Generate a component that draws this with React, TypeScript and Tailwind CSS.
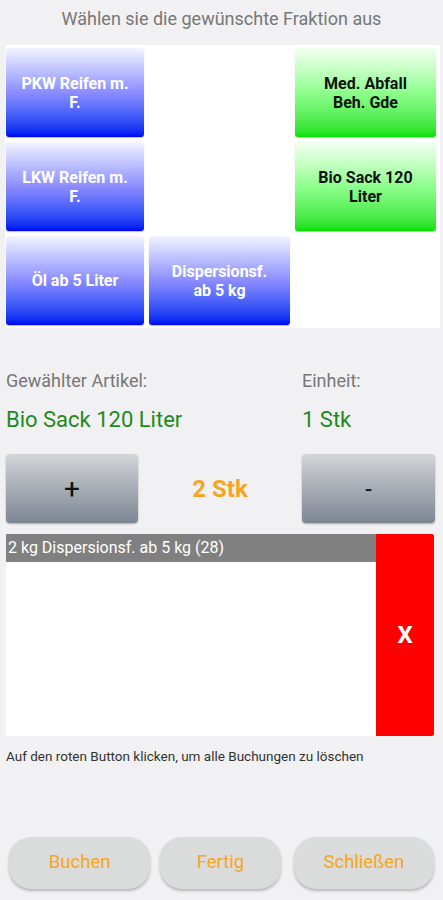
import React from 'react';

type Tile = { label: string[]; color: 'blue' | 'green' } | null;

const tiles: Tile[] = [
  { label: ['PKW Reifen m.', 'F.'], color: 'blue' },
  null,
  { label: ['Med. Abfall', 'Beh. Gde'], color: 'green' },
  { label: ['LKW Reifen m.', 'F.'], color: 'blue' },
  null,
  { label: ['Bio Sack 120', 'Liter'], color: 'green' },
  { label: ['Öl ab 5 Liter'], color: 'blue' },
  { label: ['Dispersionsf.', 'ab 5 kg'], color: 'blue' },
  null,
];

const App: React.FC = () => {
  return (
    <div className="w-[443px] h-[900px] bg-[#f1f1f3] flex flex-col font-['Roboto',sans-serif] overflow-hidden">
      {/* title */}
      <div className="h-[45px] pt-[7px] text-center text-[18px] leading-[24px] text-[#777]">
        Wählen sie die gewünschte Fraktion aus
      </div>

      {/* fraction grid */}
      <div className="mx-[5px] w-[435px] bg-white pt-[3px] pb-[3px] px-[1px] grid grid-cols-[138px_141px_141px] grid-rows-[89px_89px_89px] gap-x-[5px] gap-y-[5px]">
        {tiles.map((t, i) =>
          t ? (
            <div
              key={i}
              className={
                t.color === 'blue'
                  ? 'rounded-[3px] bg-gradient-to-b from-[#f4f4ff] via-[#8c8cff] to-[#0000f0] text-white font-bold text-[16px] leading-[19px] flex flex-col items-center justify-center text-center shadow-[0_1px_1px_rgba(0,0,0,0.25)]'
                  : 'rounded-[3px] bg-gradient-to-b from-[#f2fff2] via-[#8cff8c] to-[#00e000] text-[#111] font-bold text-[16px] leading-[19px] flex flex-col items-center justify-center text-center shadow-[0_1px_1px_rgba(0,0,0,0.25)]'
              }
            >
              {t.label.map((l) => (
                <span key={l}>{l}</span>
              ))}
            </div>
          ) : (
            <div key={i} />
          )
        )}
      </div>

      {/* selected article */}
      <div className="mt-[42px] flex px-[6px] text-[18px] leading-[22px] text-[#777]">
        <div className="w-[296px]">Gewählter Artikel:</div>
        <div>Einheit:</div>
      </div>
      <div className="mt-[14px] flex px-[6px] text-[22px] leading-[28px] text-[#1e8a1e]">
        <div className="w-[296px]">Bio Sack 120 Liter</div>
        <div>1 Stk</div>
      </div>

      {/* quantity */}
      <div className="mt-[20px] flex items-center px-[6px]">
        <div className="w-[132px] h-[69px] rounded-[4px] bg-gradient-to-b from-[#d3d5d8] to-[#7c8693] shadow-[0_1px_2px_rgba(0,0,0,0.3)] flex items-center justify-center text-[28px] text-[#111]">
          +
        </div>
        <div className="flex-1 text-center text-[24px] font-bold text-[#f5a524]">2 Stk</div>
        <div className="w-[133px] h-[69px] mr-[2px] rounded-[4px] bg-gradient-to-b from-[#d3d5d8] to-[#7c8693] shadow-[0_1px_2px_rgba(0,0,0,0.3)] flex items-center justify-center text-[24px] text-[#111]">
          -
        </div>
      </div>

      {/* bookings list */}
      <div className="mt-[11px] mx-[6px] w-[428px] h-[202px] flex">
        <div className="flex-1 bg-white">
          <div className="h-[28px] bg-[#808080] text-white text-[16px] leading-[28px] px-[2px]">
            2 kg Dispersionsf. ab 5 kg (28)
          </div>
        </div>
        <div className="w-[58px] bg-[#ff0000] rounded-r-[2px] flex items-center justify-center text-white font-bold text-[24px]">
          X
        </div>
      </div>
      <div className="mt-[11px] px-[6px] text-[13.5px] leading-[18px] text-[#333]">
        Auf den roten Button klicken, um alle Buchungen zu löschen
      </div>

      {/* actions */}
      <div className="mt-[72px] flex px-[9px] gap-[10px]">
        <div className="w-[142px] h-[52px] rounded-[22px] bg-[#dadbdb] shadow-[0_2px_3px_rgba(0,0,0,0.25)] flex items-center justify-center text-[18.5px] text-[#f5a623]">
          Buchen
        </div>
        <div className="w-[121px] h-[52px] rounded-[22px] bg-[#dadbdb] shadow-[0_2px_3px_rgba(0,0,0,0.25)] flex items-center justify-center text-[18.5px] text-[#f5a623]">
          Fertig
        </div>
        <div className="w-[141px] h-[52px] ml-[3px] rounded-[22px] bg-[#dadbdb] shadow-[0_2px_3px_rgba(0,0,0,0.25)] flex items-center justify-center text-[18.5px] text-[#f5a623]">
          Schließen
        </div>
      </div>
    </div>
  );
};

export default App;
